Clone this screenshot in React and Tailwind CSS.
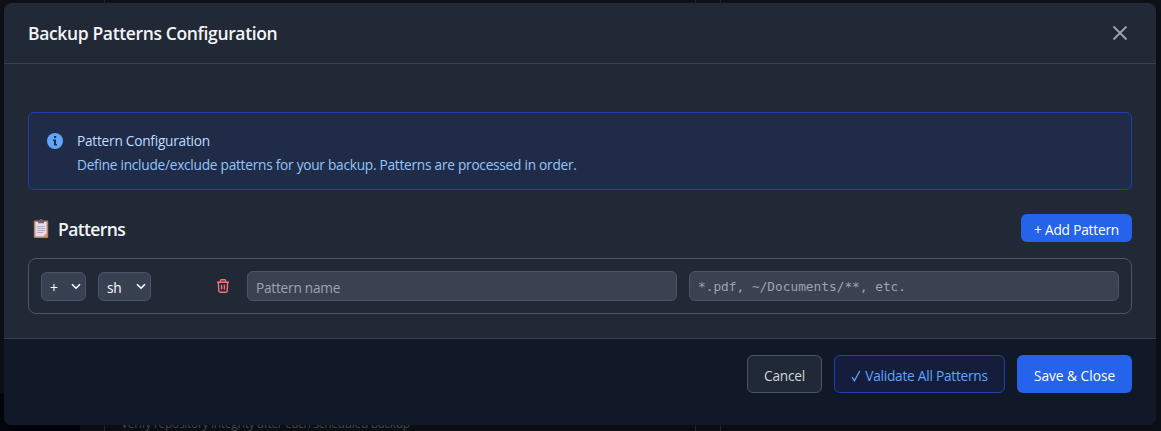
import React from "react";

function ClipboardIcon() {
  return (
    <svg width="18" height="20" viewBox="0 0 18 20" className="mt-0.5 shrink-0">
      <rect x="1.8" y="1.5" width="14.4" height="17.5" rx="1" fill="#b87f63" />
      <path d="M3.4 3h11.2v11.2l-3.4 3.3H3.4z" fill="#e4dff0" />
      <path d="M14.6 14.2v3.3h-3.4z" fill="#e8a05c" />
      <path d="M6 1.2h1.6a1.4 1.2 0 0 1 2.8 0H12v3H6z" fill="#6d6078" />
      <path d="M5 7.5h8M5 9.5h8M5 11.5h8M5 13.5h6" stroke="#aaa3bd" strokeWidth="0.9" />
    </svg>
  );
}

function TrashIcon() {
  return (
    <svg width="14" height="14" viewBox="0 0 14 14" fill="none" stroke="#f87171" strokeWidth="1.4">
      <path d="M1 3.3h12M4.4 3.2V1.6a.9.9 0 0 1 .9-.9h3.4a.9.9 0 0 1 .9.9v1.6M2.4 3.4l.4 8.4c0 .8.6 1.4 1.4 1.4h5.6c.8 0 1.4-.6 1.4-1.4l.4-8.4M5.6 5.8v4.8M8.4 5.8v4.8" />
    </svg>
  );
}

function Select({ value, className }) {
  return (
    <button className={`flex h-[29px] items-center justify-between rounded-md border border-[#4b5563] bg-[#374151] pr-1 text-white ${className}`}>
      <span className="pt-[3px]">{value}</span>
      <svg width="10" height="7" viewBox="0 0 10 7" fill="none" stroke="#fff" strokeWidth="1.6">
        <path d="M1 1.2l4 4 4-4" />
      </svg>
    </button>
  );
}

function Backdrop() {
  return (
    <div className="flex h-[431px] overflow-hidden bg-[#0d1117]">
      <div className="flex w-20 flex-col">
        <div className="h-[394px] bg-[#0d1117]" />
        <div className="flex-1 bg-[#04060d]" />
      </div>
      <div className="ml-6 flex w-[592px] items-end border-x border-[#23272f] pl-4">
        <span className="text-[12px] leading-[14px] tracking-[-0.3px] text-[#4a4f57]">Verify repository integrity after each scheduled backup</span>
      </div>
      <div className="ml-6 flex-1 border-l border-[#23272f]" />
    </div>
  );
}

export default function App() {
  return (
    <div className="relative h-[431px] overflow-hidden font-['Open_Sans','Noto_Sans',sans-serif] text-[13.7px] leading-5 tracking-[-0.25px]">
      <Backdrop />
      <div className="absolute top-[3px] left-1 flex h-[422px] w-[1152px] flex-col overflow-hidden rounded-lg bg-[#212936] shadow-lg">
        <header className="flex h-[61px] shrink-0 items-center justify-between border-b border-[#374151] px-6">
          <h2 className="text-[17.5px] font-semibold tracking-[-0.36px] text-gray-100">Backup Patterns Configuration</h2>
          <button className="mr-1 text-[#9ca3af]">
            <svg width="16" height="16" viewBox="0 0 16 16" fill="none" stroke="currentColor" strokeWidth="1.8">
              <path d="M1.5 1.5l13 13M14.5 1.5l-13 13" />
            </svg>
          </button>
        </header>
        <main className="flex h-[274px] shrink-0 flex-col px-6 pt-12">
          <section className="flex h-[78px] shrink-0 gap-3.5 rounded-md border border-[#1e40af] bg-[#202c47] px-[18px] pt-[17px]">
            <svg width="16" height="16" viewBox="0 0 16 16" className="mt-[3px] shrink-0">
              <circle cx="8" cy="8" r="8" fill="#60a5fa" />
              <path d="M7 3h2.2v2H7zM6 6.6h3v4.4h1v1.4H7V8H6z" fill="#202c47" />
            </svg>
            <div className="flex flex-col gap-1 pt-px">
              <h3 className="text-[#bfdbfe]">Pattern Configuration</h3>
              <p className="tracking-[-0.26px] text-[#93c5fd]">Define include/exclude patterns for your backup. Patterns are processed in order.</p>
            </div>
          </section>
          <div className="mt-6 flex h-7 items-center justify-between">
            <div className="flex items-center gap-2 pl-1">
              <ClipboardIcon />
              <h3 className="pt-0.5 text-[17.5px] font-semibold tracking-[-0.6px] text-gray-100">Patterns</h3>
            </div>
            <button className="flex h-7 w-[111px] items-center justify-center rounded-md bg-[#2563eb] pt-[3px] tracking-[-0.2px] text-white">+ Add Pattern</button>
          </div>
          <div className="mt-4 flex h-14 shrink-0 items-center rounded-lg border border-[#4b5563] px-3">
            <Select value="+" className="w-[45px] pl-2" />
            <Select value="sh" className="ml-3 w-[53px] pl-2" />
            <button className="ml-[65px]"><TrashIcon /></button>
            <div className="ml-[17px] flex h-[30px] w-[430px] items-center rounded-md border border-[#4b5563] bg-[#3a4252] px-2 pt-[3px] text-[#9ca3af]">Pattern name</div>
            <div className="ml-3 flex h-[30px] w-[430px] items-center rounded-md border border-[#4b5563] bg-[#3a4252] px-2 pt-0.5 font-['DejaVu_Sans_Mono',monospace] text-[12.8px] tracking-normal text-[#9ca3af]">*.pdf, ~/Documents/**, etc.</div>
          </div>
        </main>
        <footer className="flex flex-1 items-start justify-end gap-3 border-t border-[#374151] bg-[#111827] px-6 pt-4">
          <button className="flex h-[38px] w-[75px] items-center justify-center rounded-md border border-[#4b5563] bg-[#1f2937] pt-[3px] text-[#d1d5db]">Cancel</button>
          <button className="flex h-[38px] w-[171px] items-center justify-center gap-1 rounded-md border border-[#1e40af] bg-[#141e3c] pt-[3px] text-[#60a5fa]">
            <svg width="10" height="12" viewBox="0 0 10 12" fill="none" stroke="currentColor" strokeWidth="1.3">
              <path d="M1 7.2l2.4 3.6L8.8 1" />
            </svg>
            <span>Validate All Patterns</span>
          </button>
          <button className="flex h-[38px] w-[115px] items-center justify-center rounded-md bg-[#2563eb] pt-[3px] tracking-normal text-white">Save &amp; Close</button>
        </footer>
      </div>
    </div>
  );
}
